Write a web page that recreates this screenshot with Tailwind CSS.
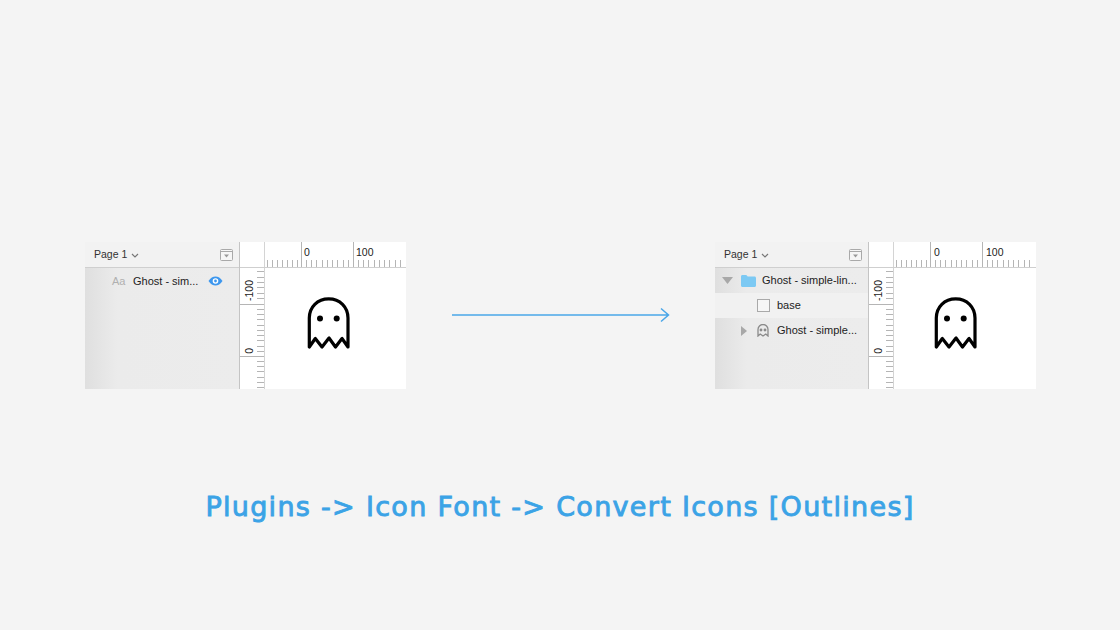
<!DOCTYPE html>
<html lang="en">
<head>
  <meta charset="UTF-8">
  <title>Convert Icons</title>
  <script src="https://cdn.jsdelivr.net/npm/@tailwindcss/browser@4"></script>
</head>
<body class="w-[1120px] h-[630px] overflow-hidden bg-[#f4f4f4] font-['Liberation_Sans',sans-serif]">
  <div class="flex items-start pt-[242px] pl-[85px]">

    <!-- before -->
    <div class="flex w-[321px] h-[147px]">
      <div class="w-[155px] flex flex-col border-r border-[#c4c4c4] bg-[linear-gradient(90deg,#dfdfdf,#ebebeb_32px,#ececec)]">
        <div class="h-[26px] shrink-0 flex items-center pl-[9px] pr-[6px] bg-[#f2f2f2] border-b border-[#cfcfcf] text-[10.500px] text-[#333]">
          <span>Page 1</span>
          <svg class="ml-[4px] mt-[1px]" width="8" height="5" viewBox="0 0 8 5" fill="none" stroke="#777" stroke-width="1.2"><path d="M1 1l3 3 3-3"/></svg>
          <svg class="ml-auto mt-[1px]" width="13" height="12" viewBox="0 0 13 12" fill="none"><rect x=".5" y=".5" width="12" height="11" rx="1" fill="#f6f6f6" stroke="#a9a9a9"/><path d="M.5 2.500h12" stroke="#a9a9a9"/><path d="M4 5.500h5l-2.500 3z" fill="#999"/></svg>
        </div>
        <div class="h-[26px] flex items-center pl-[27px] text-[11px] text-[#222]">
          <span class="w-[21px] text-[#b0b0b0]">Aa</span>
          <span>Ghost - sim...</span>
          <svg class="ml-[10px] -mt-[1px]" width="15" height="10" viewBox="0 0 15 10"><path d="M.5 5C2.500 1.800 5 .5 7.500 .5S12.500 1.800 14.500 5C12.500 8.200 10 9.500 7.500 9.500S2.500 8.200 .5 5z" fill="#3d97ee"/><circle cx="7.500" cy="5" r="2.800" fill="#fff"/><circle cx="7.500" cy="5" r="1.400" fill="#3d97ee"/></svg>
        </div>
      </div>
      <div class="w-[166px] flex flex-col bg-white">
        <div class="h-[26px] shrink-0 flex border-b border-[#cfcfcf]">
          <div class="w-[25px] shrink-0 border-r border-[#d4d4d4]"></div>
          <div class="relative flex-1 overflow-hidden">
            <svg class="absolute left-0 bottom-0" width="141" height="25" fill="none" stroke="#b5b5b5"><path d="M2.500 18v7M7.500 18v7M12.500 18v7M17.500 18v7M22.500 18v7M27.500 18v7M32.500 18v7M36.500 0v25M41.500 18v7M46.500 18v7M51.500 18v7M57.500 18v7M62.500 18v7M67.500 18v7M72.500 18v7M78.500 18v7M83.500 18v7M88.500 0v25M93.500 18v7M98.500 18v7M103.500 18v7M109.500 18v7M114.500 18v7M119.500 18v7M124.500 18v7M130.500 18v7M135.500 18v7"/></svg>
            <span class="absolute left-[39px] top-[3px] rotate-[0.02deg] text-[10.500px] leading-[14px] text-[#222]">0</span>
            <span class="absolute left-[91px] top-[3px] rotate-[0.02deg] text-[10.500px] leading-[14px] text-[#222]">100</span>
          </div>
        </div>
        <div class="flex flex-1">
          <div class="relative w-[25px] shrink-0 border-r border-[#d4d4d4] overflow-hidden">
            <svg class="absolute left-0 top-0" width="24" height="121" fill="none" stroke="#b5b5b5"><path d="M17 3.500h7M17 9.500h7M17 14.500h7M17 19.500h7M17 25.500h7M17 30.500h7M0 36.500h24M17 41.500h7M17 46.500h7M17 51.500h7M17 57.500h7M17 62.500h7M17 67.500h7M17 72.500h7M17 78.500h7M17 83.500h7M0 88.500h24M17 93.500h7M17 98.500h7M17 103.500h7M17 109.500h7M17 114.500h7M17 119.500h7"/></svg>
            <span class="absolute left-[3px] top-[12px] [writing-mode:vertical-rl] rotate-180 text-[10.500px] leading-[12px] text-[#222]">-100</span>
            <span class="absolute left-[3px] top-[80px] [writing-mode:vertical-rl] rotate-180 text-[10.500px] leading-[12px] text-[#222]">0</span>
          </div>
          <div class="pl-[42px] pt-[29px]">
            <svg width="44" height="53" viewBox="0 0 44 53" fill="none" stroke="#000" stroke-width="3.200" stroke-linecap="round" stroke-linejoin="round"><path d="M2.300 50V21C2.300 10 10.500 1.800 21.700 1.800S41 10 41 21V50L35 41.500 28.500 50 22 41 15 50 8.300 41.500z"/><circle cx="13" cy="21.500" r="3" fill="#000" stroke="none"/><circle cx="29.700" cy="21.500" r="3" fill="#000" stroke="none"/></svg>
          </div>
        </div>
      </div>
    </div>

    <!-- arrow -->
    <svg class="ml-[45px] mt-[65px] shrink-0" width="219" height="16" viewBox="0 0 219 16" fill="none" stroke="#4aa6e8" stroke-width="1.500"><path d="M1 8H217M210 1.500L217.500 8 210 14.500"/></svg>

    <!-- after -->
    <div class="ml-[45px] flex w-[321px] h-[147px]">
      <div class="w-[154px] flex flex-col border-r border-[#c4c4c4] bg-[linear-gradient(90deg,#dfdfdf,#ebebeb_32px,#ececec)]">
        <div class="h-[26px] shrink-0 flex items-center pl-[9px] pr-[6px] bg-[#f2f2f2] border-b border-[#cfcfcf] text-[10.500px] text-[#333]">
          <span>Page 1</span>
          <svg class="ml-[4px] mt-[1px]" width="8" height="5" viewBox="0 0 8 5" fill="none" stroke="#777" stroke-width="1.2"><path d="M1 1l3 3 3-3"/></svg>
          <svg class="ml-auto mt-[1px]" width="13" height="12" viewBox="0 0 13 12" fill="none"><rect x=".5" y=".5" width="12" height="11" rx="1" fill="#f6f6f6" stroke="#a9a9a9"/><path d="M.5 2.500h12" stroke="#a9a9a9"/><path d="M4 5.500h5l-2.500 3z" fill="#999"/></svg>
        </div>
        <div class="h-[25px] flex items-center pl-[7px] text-[11px] text-[#222]">
          <svg width="11" height="7" viewBox="0 0 11 7"><path d="M0 0h11L5.500 7z" fill="#a8a8a8"/></svg>
          <svg class="ml-[8px]" width="15" height="12" viewBox="0 0 15 12"><path d="M0 1.500C0 .6.600 0 1.500 0h3.800l1.400 1.500h6.800c.9 0 1.500.6 1.500 1.500v7.500c0 .9-.6 1.500-1.500 1.500h-12C.600 12 0 11.400 0 10.500z" fill="#7cc9f3"/></svg>
          <span class="ml-[6px]">Ghost - simple-lin...</span>
        </div>
        <div class="h-[25px] flex items-center pl-[42px] bg-[#f1f1f1] text-[11px] text-[#222]">
          <span class="block w-[13px] h-[13px] bg-[#f6f6f6] border border-[#a9a9a9]"></span>
          <span class="ml-[7px]">base</span>
        </div>
        <div class="h-[25px] flex items-center pl-[26px] text-[11px] text-[#222]">
          <svg width="6" height="10" viewBox="0 0 6 10"><path d="M0 0l6 5-6 5z" fill="#a8a8a8"/></svg>
          <svg class="ml-[10px]" width="12" height="13" viewBox="0 0 12 13" fill="none" stroke="#8a8a8a" stroke-width="1.300"><path d="M1 12V5.500a5 5 0 0 1 10 0V12L8.800 10 6 12 3.200 10z"/><circle cx="4" cy="6" r=".8" fill="#8a8a8a"/><circle cx="8" cy="6" r=".8" fill="#8a8a8a"/></svg>
          <span class="ml-[8px]">Ghost - simple...</span>
        </div>
      </div>
      <div class="w-[167px] flex flex-col bg-white">
        <div class="h-[26px] shrink-0 flex border-b border-[#cfcfcf]">
          <div class="w-[25px] shrink-0 border-r border-[#d4d4d4]"></div>
          <div class="relative flex-1 overflow-hidden">
            <svg class="absolute left-0 bottom-0" width="142" height="25" fill="none" stroke="#b5b5b5"><path d="M2.500 18v7M7.500 18v7M12.500 18v7M17.500 18v7M22.500 18v7M27.500 18v7M32.500 18v7M36.500 0v25M41.500 18v7M46.500 18v7M51.500 18v7M57.500 18v7M62.500 18v7M67.500 18v7M72.500 18v7M78.500 18v7M83.500 18v7M88.500 0v25M93.500 18v7M98.500 18v7M103.500 18v7M109.500 18v7M114.500 18v7M119.500 18v7M124.500 18v7M130.500 18v7M135.500 18v7"/></svg>
            <span class="absolute left-[40px] top-[3px] rotate-[0.02deg] text-[10.500px] leading-[14px] text-[#222]">0</span>
            <span class="absolute left-[92px] top-[3px] rotate-[0.02deg] text-[10.500px] leading-[14px] text-[#222]">100</span>
          </div>
        </div>
        <div class="flex flex-1">
          <div class="relative w-[25px] shrink-0 border-r border-[#d4d4d4] overflow-hidden">
            <svg class="absolute left-0 top-0" width="24" height="121" fill="none" stroke="#b5b5b5"><path d="M17 3.500h7M17 9.500h7M17 14.500h7M17 19.500h7M17 25.500h7M17 30.500h7M0 36.500h24M17 41.500h7M17 46.500h7M17 51.500h7M17 57.500h7M17 62.500h7M17 67.500h7M17 72.500h7M17 78.500h7M17 83.500h7M0 88.500h24M17 93.500h7M17 98.500h7M17 103.500h7M17 109.500h7M17 114.500h7M17 119.500h7"/></svg>
            <span class="absolute left-[3px] top-[12px] [writing-mode:vertical-rl] rotate-180 text-[10.500px] leading-[12px] text-[#222]">-100</span>
            <span class="absolute left-[3px] top-[80px] [writing-mode:vertical-rl] rotate-180 text-[10.500px] leading-[12px] text-[#222]">0</span>
          </div>
          <div class="pl-[40px] pt-[29px]">
            <svg width="44" height="53" viewBox="0 0 44 53" fill="none" stroke="#000" stroke-width="3.200" stroke-linecap="round" stroke-linejoin="round"><path d="M2.300 50V21C2.300 10 10.500 1.800 21.700 1.800S41 10 41 21V50L35 41.500 28.500 50 22 41 15 50 8.300 41.500z"/><circle cx="13" cy="21.500" r="3" fill="#000" stroke="none"/><circle cx="29.700" cy="21.500" r="3" fill="#000" stroke="none"/></svg>
          </div>
        </div>
      </div>
    </div>
  </div>

  <h1 class="mt-[101px] text-center text-[27px] leading-[34px] font-normal tracking-[1.3px] [-webkit-text-stroke-width:0.9px] [-webkit-text-stroke-color:#3ba3e6] text-[#3ba3e6] font-['DejaVu_Sans',sans-serif]">Plugins -&gt; Icon Font -&gt; Convert Icons [Outlines]</h1>
</body>
</html>
